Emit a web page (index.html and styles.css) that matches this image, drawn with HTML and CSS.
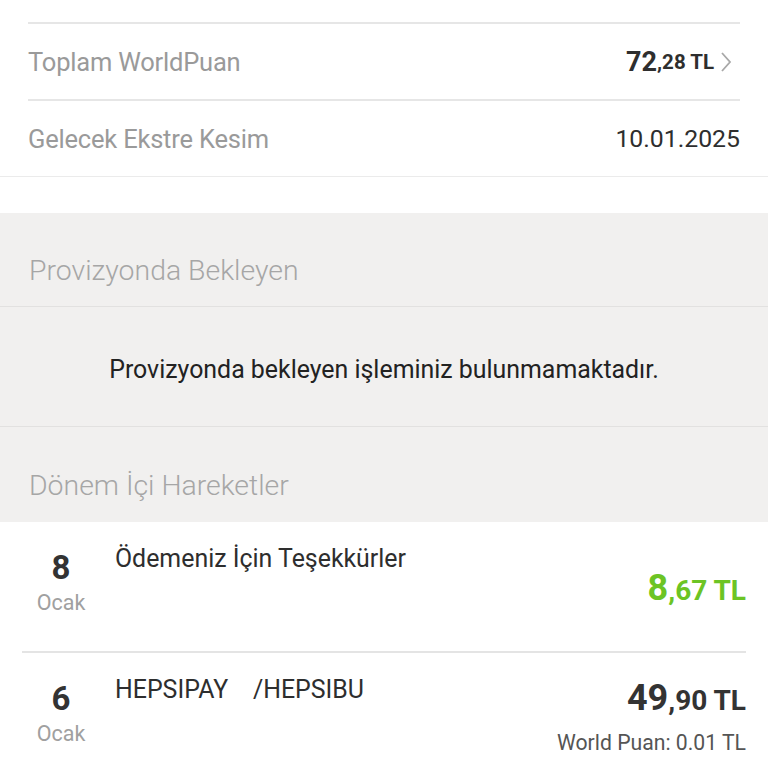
FILE: index.html
```html
<!DOCTYPE html>
<html lang="tr">
<head>
<meta charset="utf-8">
<link rel="stylesheet" href="styles.css">
</head>
<body>
<div class="page">
  <section class="summary">
    <div class="summary-inner">
      <div class="srow">
        <span class="slabel">Toplam WorldPuan</span>
        <span class="svalue bold"><span class="big">72</span><span class="small">,28 TL</span>
          <svg class="chev" width="12" height="22" viewBox="0 0 12 22"><path d="M2 2 L10 11 L2 20" fill="none" stroke="#a8a8a8" stroke-width="1.8"/></svg>
        </span>
      </div>
      <div class="srow">
        <span class="slabel">Gelecek Ekstre Kesim</span>
        <span class="svalue">10.01.2025</span>
      </div>
    </div>
  </section>

  <section class="gray">
    <div class="ghead">Provizyonda Bekleyen</div>
    <div class="gmsg">Provizyonda bekleyen işleminiz bulunmamaktadır.</div>
    <div class="ghead last">Dönem İçi Hareketler</div>
  </section>

  <section class="list">
    <div class="tx">
      <div class="date"><span class="day">8</span><span class="mon">Ocak</span></div>
      <div class="title">Ödemeniz İçin Teşekkürler</div>
      <div class="amt green"><span class="big">8</span><span class="small">,67 TL</span></div>
    </div>
    <div class="tx">
      <div class="date"><span class="day">6</span><span class="mon">Ocak</span></div>
      <div class="title">HEPSIPAY&nbsp;&nbsp;&nbsp;&nbsp;/HEPSIBU</div>
      <div class="amt-col">
        <div class="amt"><span class="big">49</span><span class="small">,90 TL</span></div>
        <div class="wp">World Puan: 0.01 TL</div>
      </div>
    </div>
  </section>
</div>
</body>
</html>
```

FILE: styles.css
```css
* { box-sizing: border-box; }
html, body { margin: 0; padding: 0; background: #fff; }
body { font-family: Roboto, "Noto Sans", sans-serif; color: #333; overflow: hidden; }
.page { width: 768px; }

.summary { border-bottom: 1px solid #ebebeb; padding-top: 22px; }
.summary-inner { margin: 0 28px; }
.srow {
  display: flex; justify-content: space-between; align-items: center;
  height: 77px; border-top: 2px solid #e6e6e6;
}
.slabel { font-size: 25.5px; color: #9a9a9a; letter-spacing: -0.2px; }
.svalue { font-size: 24.8px; color: #2e2e2e; display: flex; align-items: center; }
.svalue.bold { font-weight: 700; padding-right: 8px; }
.svalue .big { font-size: 27px; }
.svalue .small { font-size: 20.5px; }
.chev { margin-left: 6px; }

.gray { background: #f1f0ef; margin-top: 36px; }
.ghead {
  font-size: 28.4px; font-weight: 300; color: #a6a6a6;
  padding: 40px 29px 0; height: 94px; line-height: 36px;
  border-bottom: 1px solid #e2e1e0;
}
.ghead.last { border-bottom: none; height: 95px; padding-top: 41px; }
.gmsg {
  height: 120px; padding-top: 6px; display: flex; align-items: center; justify-content: center;
  font-size: 24.9px; color: #222; border-bottom: 1px solid #e2e1e0;
}

.list { padding: 0 22px; }
.tx {
  display: flex; align-items: flex-start; height: 131px; padding-top: 26px;
  border-bottom: 2px solid #e4e4e4;
}
.tx:last-child { border-bottom: none; }
.date { width: 78px; display: flex; flex-direction: column; align-items: center; }
.day { font-size: 33px; font-weight: 700; color: #333; line-height: 40px; }
.mon { font-size: 21.5px; color: #a0a0a0; line-height: 26px; margin-top: 2px; }
.title { flex: 1; margin-left: 15px; font-size: 24.9px; color: #2e2e2e; line-height: 30px; margin-top: -4px; }
.amt { font-weight: 700; color: #333; text-align: right; line-height: 40px; white-space: nowrap; }
.amt .big { font-size: 36px; }
.amt .small { font-size: 28px; }
.amt.green { color: #6cc424; margin-top: 20px; }
.amt-col { display: flex; flex-direction: column; align-items: flex-end; margin-top: -1px; }
.wp { font-size: 21.2px; color: #555; line-height: 26px; margin-top: 5px; }
```
